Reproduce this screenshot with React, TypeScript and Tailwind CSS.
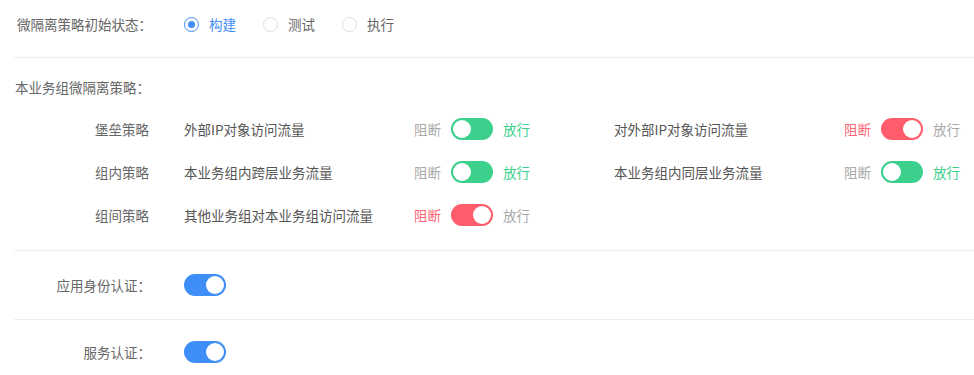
import React, { useState } from 'react';

const FONT = { fontFamily: '"Microsoft YaHei", "Noto Sans CJK SC", "Noto Sans", sans-serif' };

type Policy = {
  id: string;
  label: string;
  allow: boolean;
};

const Radio: React.FC<{ checked: boolean; label: string; onClick: () => void }> = ({ checked, label, onClick }) => (
  <button type="button" onClick={onClick} className="flex items-center mr-[27px]">
    <span
      className={
        checked
          ? 'w-[15px] h-[15px] rounded-full border border-[#3f8ef7] flex items-center justify-center'
          : 'w-[15px] h-[15px] rounded-full border border-[#dcdfe6] bg-white'
      }
    >
      {checked && <span className="w-[7px] h-[7px] rounded-full bg-[#3f8ef7]" />}
    </span>
    <span className={checked ? 'ml-[10px] text-[#3f8ef7]' : 'ml-[10px] text-[#666]'}>{label}</span>
  </button>
);

// green = 放行 (knob left), red = 阻断 (knob right)
const PolicySwitch: React.FC<{ allow: boolean; onToggle: () => void }> = ({ allow, onToggle }) => (
  <div className="flex items-center">
    <span className={allow ? 'text-[#a9a9a9]' : 'text-[#ff6676]'}>阻断</span>
    <button
      type="button"
      onClick={onToggle}
      className={
        allow
          ? 'ml-[10px] mr-[10px] w-[42px] h-[22px] rounded-full bg-[#3bd08b] flex items-center justify-start px-[2px]'
          : 'ml-[10px] mr-[10px] w-[42px] h-[22px] rounded-full bg-[#ff5c6c] flex items-center justify-end px-[2px]'
      }
    >
      <span className="w-[18px] h-[18px] rounded-full bg-white" />
    </button>
    <span className={allow ? 'text-[#3bd08b]' : 'text-[#a9a9a9]'}>放行</span>
  </div>
);

const BlueSwitch: React.FC<{ on: boolean; onToggle: () => void }> = ({ on, onToggle }) => (
  <button
    type="button"
    onClick={onToggle}
    className={
      on
        ? 'w-[42px] h-[22px] rounded-full bg-[#3f8ef7] flex items-center justify-end px-[2px]'
        : 'w-[42px] h-[22px] rounded-full bg-[#dcdfe6] flex items-center justify-start px-[2px]'
    }
  >
    <span className="w-[18px] h-[18px] rounded-full bg-white" />
  </button>
);

const PolicyCell: React.FC<{ p: Policy; onToggle: () => void }> = ({ p, onToggle }) => (
  <div className="flex items-center justify-between">
    <span className="text-[#555]">{p.label}</span>
    <PolicySwitch allow={p.allow} onToggle={onToggle} />
  </div>
);

export default function App() {
  const [mode, setMode] = useState('build');
  const [appAuth, setAppAuth] = useState(true);
  const [svcAuth, setSvcAuth] = useState(true);
  const [policies, setPolicies] = useState<Record<string, Policy>>({
    extIn: { id: 'extIn', label: '外部IP对象访问流量', allow: true },
    extOut: { id: 'extOut', label: '对外部IP对象访问流量', allow: false },
    cross: { id: 'cross', label: '本业务组内跨层业务流量', allow: true },
    same: { id: 'same', label: '本业务组内同层业务流量', allow: true },
    other: { id: 'other', label: '其他业务组对本业务组访问流量', allow: false },
  });

  const toggle = (id: string) =>
    setPolicies({ ...policies, [id]: { ...policies[id], allow: !policies[id].allow } });

  const rows: { name: string; left: string; right?: string }[] = [
    { name: '堡垒策略', left: 'extIn', right: 'extOut' },
    { name: '组内策略', left: 'cross', right: 'same' },
    { name: '组间策略', left: 'other' },
  ];

  return (
    <div className="bg-white w-[974px] h-[375px] overflow-hidden pl-[14px] text-[13.5px] leading-[20px] text-[#666]" style={FONT}>
      {/* 初始状态 */}
      <div className="flex items-center pt-[14px] pb-[23px] border-b border-[#eeeeee]">
        <div className="w-[140px] pl-[3px] shrink-0">微隔离策略初始状态：</div>
        <div className="flex items-center ml-[30px]">
          <Radio checked={mode === 'build'} label="构建" onClick={() => setMode('build')} />
          <Radio checked={mode === 'test'} label="测试" onClick={() => setMode('test')} />
          <Radio checked={mode === 'run'} label="执行" onClick={() => setMode('run')} />
        </div>
      </div>

      {/* 本业务组微隔离策略 */}
      <div className="pt-[19px] pb-[14px] border-b border-[#eeeeee]">
        <div className="pl-[1px]">本业务组微隔离策略：</div>
        <div className="mt-[10px]">
          {rows.map(r => (
            <div key={r.name} className="flex items-center h-[43px]">
              <div className="w-[135px] text-right shrink-0">{r.name}</div>
              <div className="ml-[35px] grid grid-cols-[346px_346px] gap-x-[84px]">
                <PolicyCell p={policies[r.left]} onToggle={() => toggle(r.left)} />
                {r.right && <PolicyCell p={policies[r.right]} onToggle={() => toggle(r.right!)} />}
              </div>
            </div>
          ))}
        </div>
      </div>

      {/* 应用身份认证 */}
      <div className="flex items-center pt-[23px] pb-[23px] border-b border-[#eeeeee]">
        <div className="w-[137px] text-right shrink-0">应用身份认证：</div>
        <div className="ml-[33px]">
          <BlueSwitch on={appAuth} onToggle={() => setAppAuth(!appAuth)} />
        </div>
      </div>

      {/* 服务认证 */}
      <div className="flex items-center pt-[21px]">
        <div className="w-[137px] text-right shrink-0">服务认证：</div>
        <div className="ml-[33px]">
          <BlueSwitch on={svcAuth} onToggle={() => setSvcAuth(!svcAuth)} />
        </div>
      </div>
    </div>
  );
}
